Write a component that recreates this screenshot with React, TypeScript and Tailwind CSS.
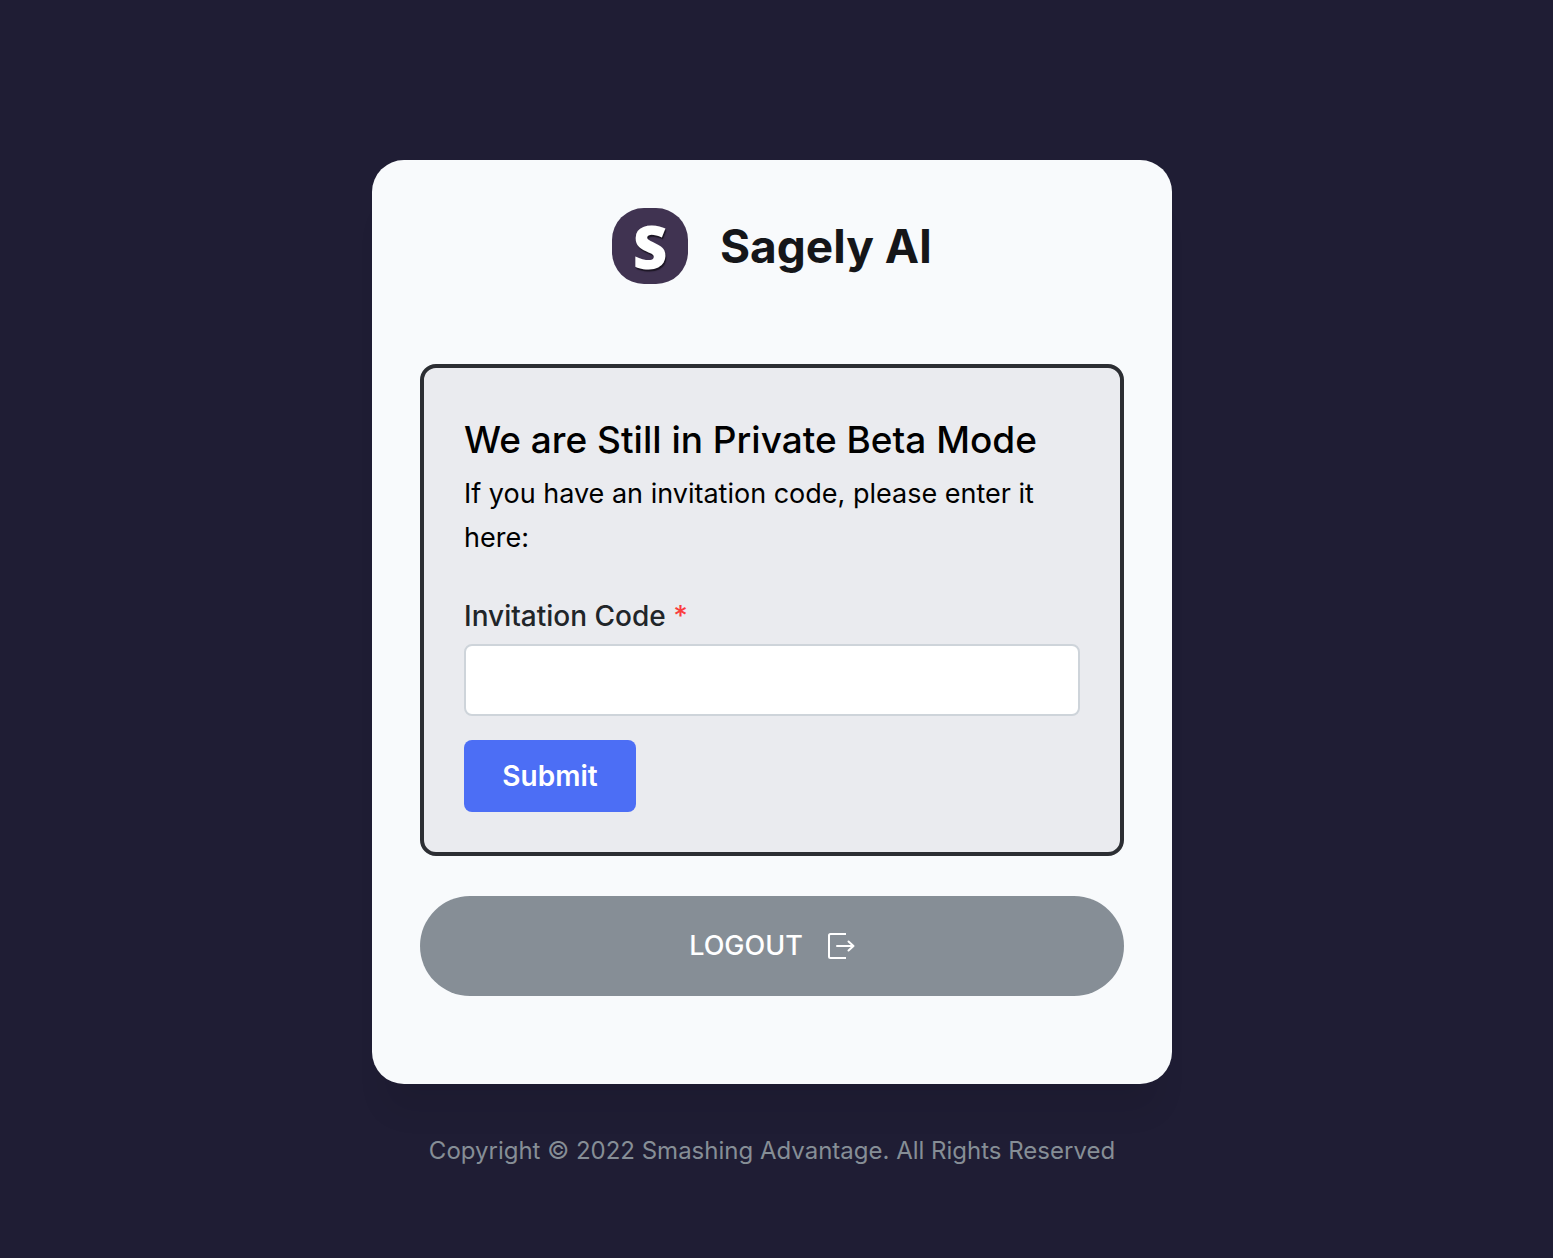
import { FormEvent, useState } from 'react';

function Logo() {
    return (
        <div className="flex h-[76px] w-[76px] items-center justify-center rounded-[32px] bg-[#403351]">
            <span className="font-['Open_Sans','Noto_Sans',sans-serif] text-[60px] leading-[76px] font-extrabold text-white [text-shadow:1px_2px_1px_#1c1624]">S</span>
        </div>
    );
}

function LogoutIcon() {
    return (
        <svg viewBox="0 0 28 28" className="h-7 w-7" fill="none" stroke="currentColor" strokeWidth="2" strokeLinecap="round" strokeLinejoin="round" aria-hidden="true">
            <path d="M19 2H3.5Q2 2 2 3.5V24.5Q2 26 3.5 26H19" strokeLinecap="butt" />
            <path d="M10 14H26.5M21.5 9.5L26.5 14L21.5 18.5" />
        </svg>
    );
}

export default function App() {
    const [code, setCode] = useState('');

    const handleSubmit = (e: FormEvent) => {
        e.preventDefault();
    };

    return (
        <div className="flex min-h-screen flex-col items-center bg-[#1f1d34] pt-40 pr-[9px] pb-20 font-['Inter','Liberation_Sans',sans-serif]">
            <main className="w-full max-w-[800px] rounded-[32px] bg-[#f8fafc] px-12 pt-12 pb-[88px] shadow-[0_40px_30px_-14px_rgba(0,0,0,0.08)]">
                <header className="flex items-center justify-center gap-8">
                    <Logo />
                    <h1 className="text-[46px] leading-[72px] font-bold text-[#151619]">Sagely AI</h1>
                </header>

                {/* Invitation form */}
                <section className="mt-20 rounded-2xl border-4 border-[#2c2e33] bg-[#eaebef] p-10">
                    <h2 className="text-[37px] leading-[64px] font-medium text-black">We are Still in Private Beta Mode</h2>
                    <p className="text-[27px] leading-[44px] text-black">If you have an invitation code, please enter it here:</p>
                    <form onSubmit={handleSubmit} className="mt-[34px] flex flex-col items-start">
                        <label htmlFor="code" className="text-[28px] leading-[44px] font-medium text-[#212529]">
                            Invitation Code <span className="text-[#fa3e3e]">*</span>
                        </label>
                        <input
                            id="code"
                            type="text"
                            required
                            value={code}
                            onChange={(e) => setCode(e.target.value)}
                            className="mt-[6px] h-[72px] w-full rounded-lg border-2 border-[#ced4da] bg-white px-6 text-[28px] outline-none"
                        />
                        <button type="submit" className="mt-6 h-[72px] w-[172px] rounded-lg bg-[#4c6ef5] text-[28px] font-semibold text-white">
                            Submit
                        </button>
                    </form>
                </section>

                <button type="button" className="mt-10 flex h-[100px] w-full items-center justify-center gap-6 rounded-full bg-[#868e96] text-[27px] font-medium text-white">
                    LOGOUT
                    <LogoutIcon />
                </button>
            </main>

            <footer className="mt-12 text-[24px] leading-[38px] text-[#868e96]">
                Copyright © 2022 Smashing Advantage. All Rights Reserved
            </footer>
        </div>
    );
}
